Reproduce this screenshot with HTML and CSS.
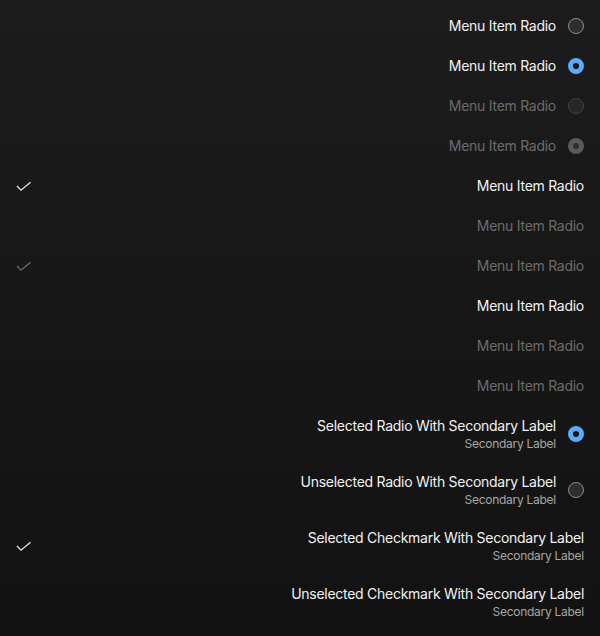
FILE: index.html
```html
<!DOCTYPE html>
<html>
<head>
<meta charset="utf-8">
<link rel="stylesheet" href="styles.css">
</head>
<body>
<div class="menu">
  <div class="row"><span class="lead"></span><span class="label">Menu Item Radio</span><span class="radio"></span></div>
  <div class="row"><span class="lead"></span><span class="label">Menu Item Radio</span><span class="radio on"></span></div>
  <div class="row dis"><span class="lead"></span><span class="label">Menu Item Radio</span><span class="radio"></span></div>
  <div class="row dis"><span class="lead"></span><span class="label">Menu Item Radio</span><span class="radio on"></span></div>
  <div class="row"><span class="lead"><svg class="check" viewBox="0 0 16 16"><path d="M1 8l4 4.2 9.5-8"/></svg></span><span class="label">Menu Item Radio</span></div>
  <div class="row dis"><span class="lead"></span><span class="label">Menu Item Radio</span></div>
  <div class="row dis"><span class="lead"><svg class="check" viewBox="0 0 16 16"><path d="M1 8l4 4.2 9.5-8"/></svg></span><span class="label">Menu Item Radio</span></div>
  <div class="row"><span class="lead"></span><span class="label">Menu Item Radio</span></div>
  <div class="row dis"><span class="lead"></span><span class="label">Menu Item Radio</span></div>
  <div class="row dis"><span class="lead"></span><span class="label">Menu Item Radio</span></div>
  <div class="row tall"><span class="lead"></span><span class="label">Selected Radio With Secondary Label<small>Secondary Label</small></span><span class="radio on"></span></div>
  <div class="row tall"><span class="lead"></span><span class="label">Unselected Radio With Secondary Label<small>Secondary Label</small></span><span class="radio"></span></div>
  <div class="row tall"><span class="lead"><svg class="check" viewBox="0 0 16 16"><path d="M1 8l4 4.2 9.5-8"/></svg></span><span class="label">Selected Checkmark With Secondary Label<small>Secondary Label</small></span></div>
  <div class="row tall"><span class="lead"></span><span class="label">Unselected Checkmark With Secondary Label<small>Secondary Label</small></span></div>
</div>
</body>
</html>
```
FILE: styles.css
```css
html, body {
  margin: 0;
  height: 100%;
}
body {
  background: linear-gradient(180deg, #1c1c1c 0%, #121212 100%);
  font-family: Inter, "Noto Sans", sans-serif;
  color: #f2f2f2;
}
.menu {
  display: flex;
  flex-direction: column;
  padding: 6px 16px;
}
.row {
  display: flex;
  align-items: center;
  height: 40px;
  gap: 12px;
}
.row.tall {
  height: 56px;
}
.lead {
  flex: 1;
  display: flex;
  align-items: center;
}
.check {
  width: 16px;
  height: 16px;
  fill: none;
  stroke: #e6e6e6;
  stroke-width: 1.3;
}
.dis .check { stroke: #6a6a6a; }
.label {
  font-size: 14px;
  line-height: 18px;
  letter-spacing: -0.27px;
  text-align: right;
  display: flex;
  flex-direction: column;
  align-items: flex-end;
}
.label small {
  font-size: 12px;
  line-height: 17px;
  letter-spacing: -0.27px;
  color: #a6a6a6;
}
.dis .label { color: #6c6c6c; }
.radio {
  width: 16px;
  height: 16px;
  box-sizing: border-box;
  border-radius: 50%;
  border: 1.5px solid #8c8c8c;
  background: #2e2e2e;
}
.radio.on {
  border: 5px solid #5aabf5;
  background: #141414;
}
.dis .radio {
  border-color: #454545;
  background: #262626;
}
.dis .radio.on {
  border-color: #5a5a5a;
  background: #303030;
}
```
